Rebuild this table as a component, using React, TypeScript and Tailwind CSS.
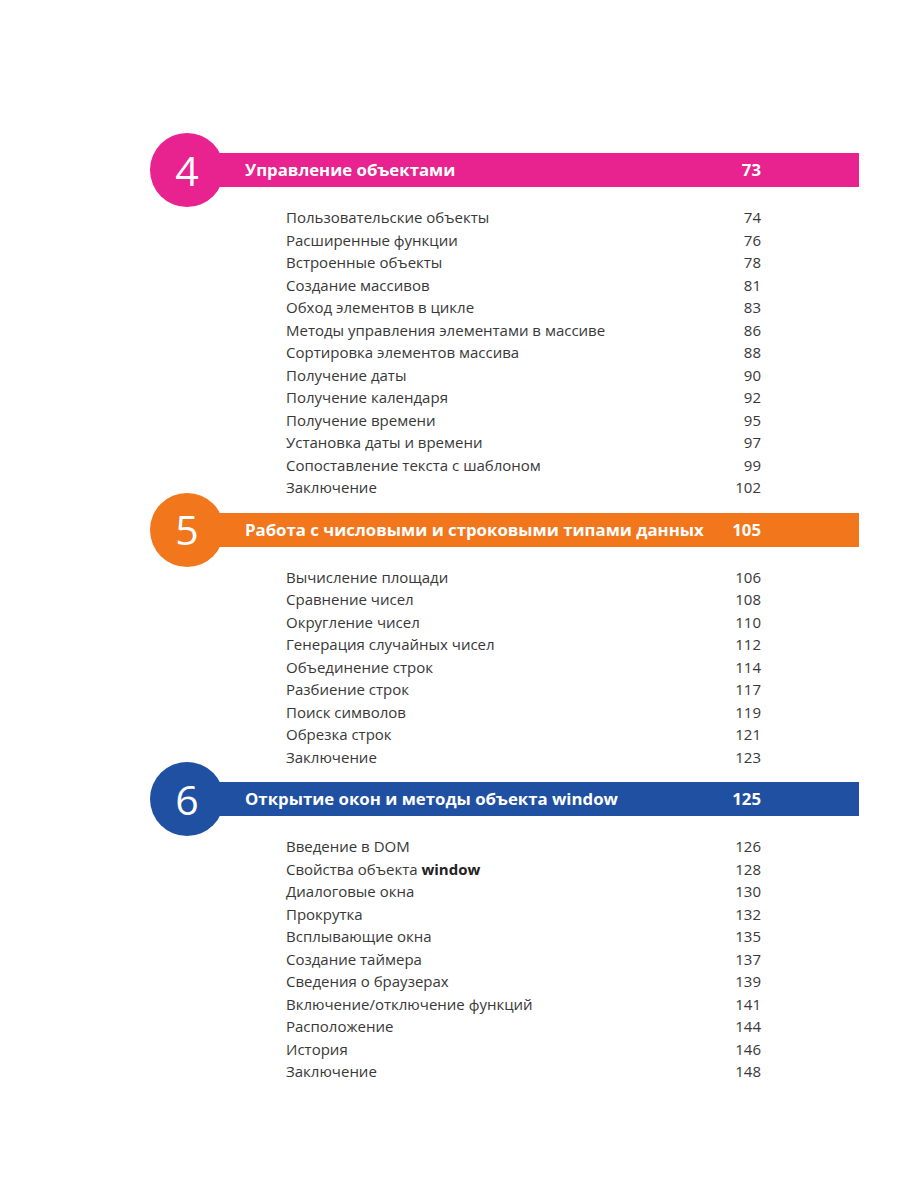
import React from 'react';

type Entry = { title: React.ReactNode; page: number };

interface Chapter {
  num: number;
  title: string;
  page: number;
  color: string;
  entries: Entry[];
}

const chapters: Chapter[] = [
  {
    num: 4,
    title: 'Управление объектами',
    page: 73,
    color: 'bg-[#e8228e]',
    entries: [
      { title: 'Пользовательские объекты', page: 74 },
      { title: 'Расширенные функции', page: 76 },
      { title: 'Встроенные объекты', page: 78 },
      { title: 'Создание массивов', page: 81 },
      { title: 'Обход элементов в цикле', page: 83 },
      { title: 'Методы управления элементами в массиве', page: 86 },
      { title: 'Сортировка элементов массива', page: 88 },
      { title: 'Получение даты', page: 90 },
      { title: 'Получение календаря', page: 92 },
      { title: 'Получение времени', page: 95 },
      { title: 'Установка даты и времени', page: 97 },
      { title: 'Сопоставление текста с шаблоном', page: 99 },
      { title: 'Заключение', page: 102 },
    ],
  },
  {
    num: 5,
    title: 'Работа с числовыми и строковыми типами данных',
    page: 105,
    color: 'bg-[#f1761c]',
    entries: [
      { title: 'Вычисление площади', page: 106 },
      { title: 'Сравнение чисел', page: 108 },
      { title: 'Округление чисел', page: 110 },
      { title: 'Генерация случайных чисел', page: 112 },
      { title: 'Объединение строк', page: 114 },
      { title: 'Разбиение строк', page: 117 },
      { title: 'Поиск символов', page: 119 },
      { title: 'Обрезка строк', page: 121 },
      { title: 'Заключение', page: 123 },
    ],
  },
  {
    num: 6,
    title: 'Открытие окон и методы объекта window',
    page: 125,
    color: 'bg-[#1f50a2]',
    entries: [
      { title: 'Введение в DOM', page: 126 },
      {
        title: (
          <>
            Свойства объекта <span className="font-bold text-[#222]">window</span>
          </>
        ),
        page: 128,
      },
      { title: 'Диалоговые окна', page: 130 },
      { title: 'Прокрутка', page: 132 },
      { title: 'Всплывающие окна', page: 135 },
      { title: 'Создание таймера', page: 137 },
      { title: 'Сведения о браузерах', page: 139 },
      { title: 'Включение/отключение функций', page: 141 },
      { title: 'Расположение', page: 144 },
      { title: 'История', page: 146 },
      { title: 'Заключение', page: 148 },
    ],
  },
];

const ChapterBlock = ({ chapter }: { chapter: Chapter }) => (
  <section>
    <div className="flex items-center h-[62px] pl-[150px] pr-[41px]">
      <div
        className={`relative z-10 w-[74px] h-[74px] shrink-0 rounded-full ${chapter.color} flex items-center justify-center text-white text-[41px] font-normal leading-none`}
      >
        {chapter.num}
      </div>
      <div
        className={`-ml-[37px] flex-1 h-[34px] ${chapter.color} flex items-center justify-between pl-[58px] pr-[98px] text-white text-[16.8px] font-bold`}
      >
        <span>{chapter.title}</span>
        <span>{chapter.page}</span>
      </div>
    </div>
    <ul className="mt-[5px] pl-[286px] pr-[139px] text-[15px] text-[#383838]">
      {chapter.entries.map((entry, i) => (
        <li key={i} className="flex justify-between h-[22.5px] leading-[22.5px]">
          <span>{entry.title}</span>
          <span>{entry.page}</span>
        </li>
      ))}
    </ul>
  </section>
);

export default function App() {
  return (
    <div className="w-[900px] h-[1200px] bg-white pt-[139px] font-['Open_Sans',sans-serif]">
      {chapters.map((chapter) => (
        <ChapterBlock key={chapter.num} chapter={chapter} />
      ))}
    </div>
  );
}
